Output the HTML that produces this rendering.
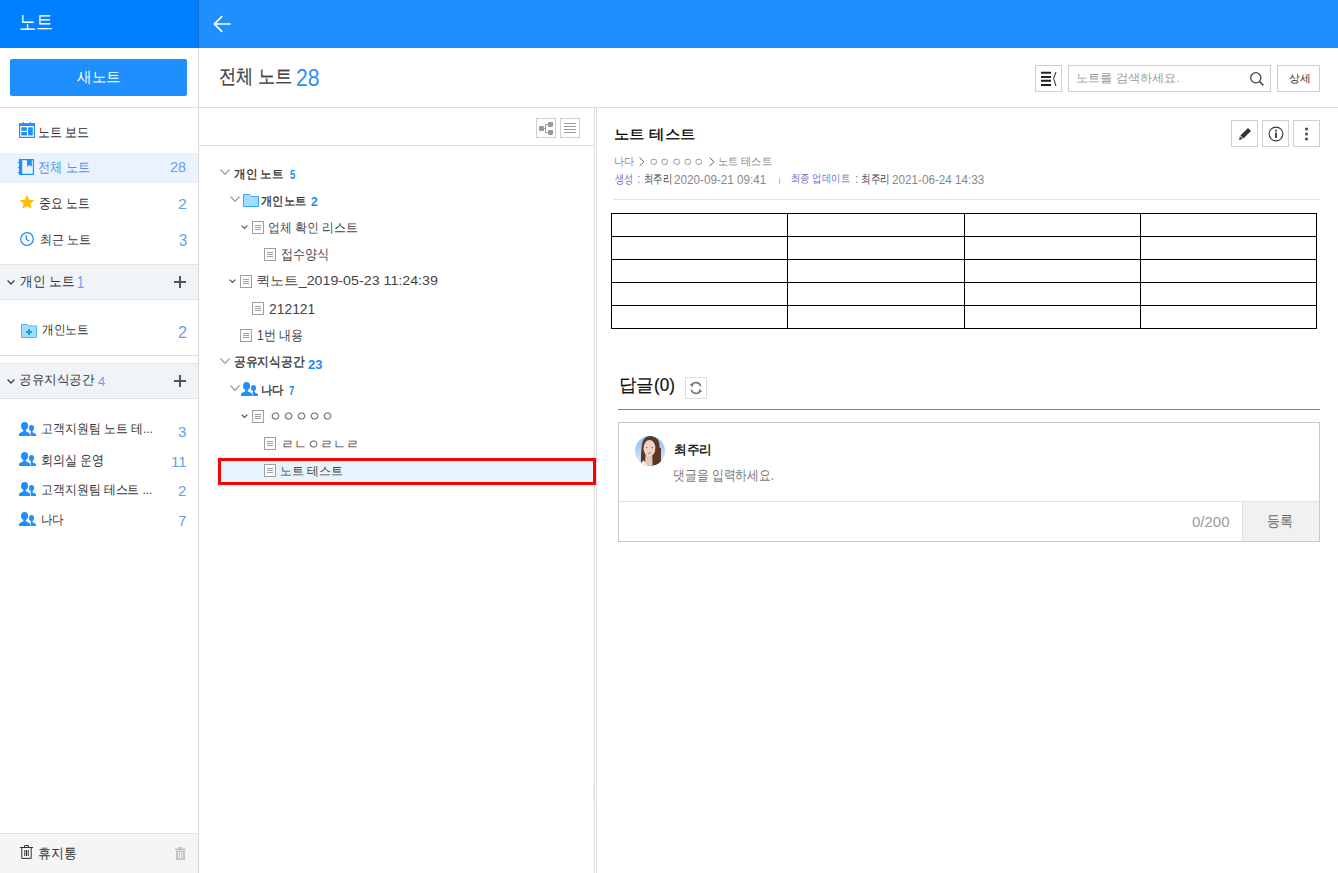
<!DOCTYPE html>
<html lang="ko">
<head>
<meta charset="utf-8">
<style>
*{box-sizing:border-box;margin:0;padding:0}
html,body{width:1338px;height:873px;overflow:hidden;background:#fff}
body{position:relative;font-family:"Liberation Sans",sans-serif;color:#333}
.a{position:absolute}
svg.a{overflow:visible}
.t{position:absolute;white-space:nowrap;line-height:1}
.hl{position:absolute;height:1px;background:#dedede}
.vl{position:absolute;width:1px;background:#dedede}
.num{color:#6a9ef2;font-size:15px}
.btn{position:absolute;border:1px solid #cfcfcf;background:#fff}
.tr{font-size:14px;color:#444}
.trb{font-size:14px;color:#333;-webkit-text-stroke:0.35px #333}
.cnt{color:#1a8cf5;font-weight:bold;font-size:12px}
.meta{font-size:12px;color:#888;letter-spacing:-0.6px}
.mb{color:#6b6fc4}
.md{color:#444}
</style>
</head>
<body>
<!-- ===== SIDEBAR ===== -->
<div class="a" style="left:0;top:0;width:199px;height:48px;background:#0080ff;border-right:1px solid #0a72dc"></div>
<div class="t" id="t_hdr" style="left: 18.6px; top: 12px; font-size: 20.77px; color: rgb(255, 255, 255); transform: scaleX(0.808); transform-origin: 0px 0px;">노트</div>
<div class="a" style="left:10px;top:59px;width:177px;height:37px;background:#1f8ffd;border-radius:2px"></div>
<div class="t" id="t_new" style="left: 77.2px; top: 69.7px; font-size: 14.66px; color: rgb(255, 255, 255); transform: scaleX(0.977); transform-origin: 0px 0px;">새노트</div>
<div class="hl" style="left:0;top:107px;width:1338px"></div>
<div class="vl" style="left:198px;top:48px;height:825px;background:#d8d8d8"></div>

<!-- menu -->
<div class="a" style="left:0;top:153px;width:198px;height:30px;background:#e8f3fd"></div>
<svg class="a" style="left:19px;top:122px" width="16" height="16" viewBox="0 0 16 16">
 <rect x="0.6" y="2.5" width="14.8" height="12.9" fill="none" stroke="#1f8ffd" stroke-width="1.2"/>
 <rect x="0" y="1.1" width="16" height="2.9" fill="#1f8ffd"/>
 <rect x="3.9" y="0" width="1" height="2" fill="#1f8ffd"/><rect x="11" y="0" width="1" height="2" fill="#1f8ffd"/>
 <rect x="2.2" y="5.3" width="5.8" height="3.4" rx="0.7" fill="#1f8ffd"/>
 <rect x="2.2" y="10.1" width="5.8" height="3.3" rx="0.7" fill="#1f8ffd"/>
 <rect x="9.1" y="5.3" width="4.7" height="8.1" rx="0.7" fill="#1f8ffd"/>
</svg>
<svg class="a" style="left:18px;top:159px" width="16" height="16" viewBox="0 0 16 16">
 <rect x="1.6" y="0.6" width="13.8" height="14.8" fill="none" stroke="#1f8ffd" stroke-width="1.2"/>
 <rect x="1" y="0" width="3.2" height="16" fill="#1f8ffd"/>
 <rect x="-0.3" y="3.1" width="1.6" height="1" fill="#1f8ffd"/><rect x="-0.3" y="8.1" width="1.6" height="1" fill="#1f8ffd"/><rect x="-0.3" y="13.1" width="1.6" height="1" fill="#1f8ffd"/>
 <path d="M9 0.6H13.8V7.8L11.4 6L9 7.8Z" fill="#1f8ffd"/>
</svg>
<svg class="a" style="left:19px;top:194px" width="16" height="16" viewBox="0 0 24 24"><path d="M12 1.2l3.2 7.3 7.9.7-6 5.2 1.8 7.8L12 18.1l-6.9 4.1 1.8-7.8-6-5.2 7.9-.7z" fill="#ffbf00"/></svg>
<svg class="a" style="left:20px;top:232px" width="14" height="14" viewBox="0 0 14 14"><circle cx="7" cy="7" r="6.3" fill="none" stroke="#1f8ffd" stroke-width="1.3"/><path d="M6.3 3.2V7.2L9.3 9.2" fill="none" stroke="#1f8ffd" stroke-width="1.3"/></svg>

<div class="t" id="m1" style="left: 38px; top: 124.6px; font-size: 14px; transform: scaleX(0.86); transform-origin: 0px 0px;">노트 보드</div>
<div class="t" id="m2" style="left: 38px; top: 160.2px; font-size: 14px; color: rgb(91, 142, 240); transform: scaleX(0.867); transform-origin: 0px 0px;">전체 노트</div>
<div class="t num" id="n1" style="left: 170.2px; top: 160px; font-size: 14.69px; transform: scaleX(0.979); transform-origin: 0px 0px;">28</div>
<div class="t" id="m3" style="left: 39px; top: 195.7px; font-size: 14px; transform: scaleX(0.841); transform-origin: 0px 0px;">중요 노트</div>
<div class="t num" id="n2" style="left: 177.8px; top: 195.6px; font-size: 15px; transform: scaleX(1.072); transform-origin: 0px 0px;">2</div>
<div class="t" id="m4" style="left: 39.8px; top: 233.7px; font-size: 12.92px; transform: scaleX(0.925); transform-origin: 0px 0px;">최근 노트</div>
<div class="t num" id="n3" style="left: 178.6px; top: 232.5px; font-size: 16.95px; transform: scaleX(0.863); transform-origin: 0px 0px;">3</div>

<!-- section 1 -->
<div class="a" style="left:0;top:264px;width:198px;height:36px;background:#f0f4f7;border-top:1px solid #dfe3e6;border-bottom:1px solid #dfe3e6"></div>
<svg class="a" style="left:7px;top:280px" width="8" height="5" viewBox="0 0 8 5"><path d="M0.6 0.6L4 4L7.4 0.6" fill="none" stroke="#444" stroke-width="1.4"/></svg>
<div class="t" id="s1" style="left: 20.2px; top: 275.4px; font-size: 13.8px; transform: scaleX(0.906); transform-origin: 0px 0px;">개인 노트</div><div class="t" id="s1n" style="left: 76.6px; top: 273.6px; font-size: 17.25px; color: rgb(106, 160, 240); transform: scaleX(0.732); transform-origin: 0px 0px;">1</div>
<svg class="a" style="left:174px;top:276px" width="12" height="12" viewBox="0 0 12 12"><path d="M6 0V12M0 6H12" stroke="#555" stroke-width="2"/></svg>
<svg class="a" style="left:21px;top:324px" width="16" height="14" viewBox="0 0 16 14"><path d="M0.5 0.5H6.6L8 2H15.5V13.5H0.5Z" fill="#a6dcfb" stroke="#4cb6f7" stroke-width="1"/><path d="M8 4.9V10.9M5 7.9H11" stroke="#169cf2" stroke-width="2"/></svg>
<div class="t" id="p1" style="left: 42px; top: 324.3px; font-size: 12.92px; transform: scaleX(0.902); transform-origin: 0px 0px;">개인노트</div>
<div class="t num" id="pn1" style="left: 177.8px; top: 324.4px; font-size: 17.25px; transform: scaleX(0.935); transform-origin: 0px 0px;">2</div>
<div class="hl" style="left:0;top:355px;width:198px"></div>
<!-- section 2 -->
<div class="a" style="left:0;top:363px;width:198px;height:36px;background:#f0f4f7;border-top:1px solid #dfe3e6;border-bottom:1px solid #dfe3e6"></div>
<svg class="a" style="left:7px;top:379px" width="8" height="5" viewBox="0 0 8 5"><path d="M0.6 0.6L4 4L7.4 0.6" fill="none" stroke="#444" stroke-width="1.4"/></svg>
<div class="t" id="s2" style="left: 19.2px; top: 374.4px; font-size: 12.75px; transform: scaleX(0.968); transform-origin: 0px 0px;">공유지식공간</div><div class="t" id="s2n" style="left: 98px; top: 374.9px; font-size: 13.02px; color: rgb(106, 160, 240); transform: scaleX(0.989); transform-origin: 0px 0px;">4</div>
<svg class="a" style="left:174px;top:375px" width="12" height="12" viewBox="0 0 12 12"><path d="M6 0V12M0 6H12" stroke="#555" stroke-width="2"/></svg>

<svg width="0" height="0" style="position:absolute">
 <defs>
  <g id="ppl"><ellipse cx="5.55" cy="4.1" rx="3.55" ry="4.1"/><path d="M0 14V12.3Q0 11.3 1.2 10.7L4.3 9.2V7H6.8V9.2L9.8 10.7Q11 11.3 11 12.3V14Z"/><ellipse cx="12.55" cy="6.1" rx="2.55" ry="3.1"/><path d="M11.6 14V10.4L12.2 9H13.5V10.2L16 11.5Q17 12 17 12.8V14Z"/></g>
  <g id="doc"><rect x="0.5" y="0.5" width="11" height="12" fill="#fff" stroke="#a0a0a0"/><path d="M3 4.5H9M3 6.5H9M3 8.5H9" stroke="#a0a0a0" stroke-width="1"/></g>
  <g id="chb"><path d="M0.5 0.5L5 5.3L9.5 0.5" fill="none" stroke="#999" stroke-width="1.2"/></g>
  <g id="chs"><path d="M0.6 0.6L3.5 3.4L6.4 0.6" fill="none" stroke="#555" stroke-width="1.3"/></g>
 </defs>
</svg>

<svg class="a" style="left:19px;top:422px" width="17" height="14" fill="#1f8ffd"><use href="#ppl"/></svg>
<svg class="a" style="left:19px;top:452px" width="17" height="14" fill="#1f8ffd"><use href="#ppl"/></svg>
<svg class="a" style="left:19px;top:482px" width="17" height="14" fill="#1f8ffd"><use href="#ppl"/></svg>
<svg class="a" style="left:19px;top:512px" width="17" height="14" fill="#1f8ffd"><use href="#ppl"/></svg>
<div class="t" id="sh1" style="left: 41px; top: 423.4px; font-size: 12.77px; transform: scaleX(0.918); transform-origin: 0px 0px;">고객지원팀 노트 테...</div>
<div class="t num" id="shn1" style="left: 178.2px; top: 423.8px; font-size: 15px; transform: scaleX(1.007); transform-origin: 0px 0px;">3</div>
<div class="t" id="sh2" style="left: 41px; top: 452.6px; font-size: 14px; transform: scaleX(0.858); transform-origin: 0px 0px;">회의실 운영</div>
<div class="t num" id="shn2" style="left: 171px; top: 453.6px; font-size: 15px;">11</div>
<div class="t" id="sh3" style="left: 41px; top: 483.8px; font-size: 12.6px; transform: scaleX(0.915); transform-origin: 0px 0px;">고객지원팀 테스트 ...</div>
<div class="t num" id="shn3" style="left: 178.2px; top: 483.4px; font-size: 15px; transform: scaleX(1.007); transform-origin: 0px 0px;">2</div>
<div class="t" id="sh4" style="left: 41px; top: 514.1px; font-size: 12.92px; transform: scaleX(0.883); transform-origin: 0px 0px;">나다</div>
<div class="t num" id="shn4" style="left: 178.2px; top: 513px; font-size: 15px; transform: scaleX(1.007); transform-origin: 0px 0px;">7</div>

<!-- trash -->
<div class="a" style="left:0;top:833px;width:198px;height:40px;background:#f5f5f5;border-top:1px solid #e2e2e2"></div>
<svg class="a" style="left:20px;top:845px" width="13" height="14" viewBox="0 0 13 14"><path d="M0 2.5H13M4.5 2.5V0.6H8.5V2.5M1.8 2.5V13.4H11.2V2.5M4.8 5V11M6.5 5V11M8.2 5V11" fill="none" stroke="#333" stroke-width="1"/></svg>
<div class="t" id="trash" style="left: 38.4px; top: 846.5px; font-size: 13.93px; transform: scaleX(0.922); transform-origin: 0px 0px;">휴지통</div>
<svg class="a" style="left:175px;top:847px" width="11" height="13" viewBox="0 0 11 13"><path d="M0 1.6H11V3H0ZM3.8 0H7.2V1.6H3.8ZM1 3.6H10V13H1Z" fill="#c4c4c4"/><path d="M3.7 5V11.5M5.5 5V11.5M7.3 5V11.5" stroke="#f5f5f5" stroke-width="0.9"/></svg>

<!-- ===== TOP BAR ===== -->
<div class="a" style="left:199px;top:0;width:1139px;height:48px;background:#1d90fe"></div>
<svg class="a" style="left:213px;top:15px" width="18" height="18" viewBox="0 0 18 18"><path d="M17.5 9H1.5M9.2 1.2L1.4 9L9.2 16.8" fill="none" stroke="#fff" stroke-width="1.7"/></svg>

<!-- main header -->
<div class="t" id="h_title" style="left: 219px; top: 67.3px; font-size: 19.7px; color: rgb(68, 68, 68); -webkit-text-stroke: 0.25px rgb(68, 68, 68); transform: scaleX(0.862); transform-origin: 0px 0px;">전체 노트</div><div class="t" id="h_num" style="left: 296px; top: 65.5px; font-size: 23.76px; color: rgb(43, 142, 245); transform: scaleX(0.89); transform-origin: 0px 0px;">28</div>

<!-- search row -->
<div class="btn" style="left:1035px;top:65px;width:27px;height:27px"></div>
<svg class="a" style="left:1041px;top:71px" width="16" height="16" viewBox="0 0 16 16"><path d="M0 1.8H10M0 5.9H10M0 9.8H10M0 13.9H10" stroke="#222" stroke-width="2"/><path d="M15 1L12.6 7.5L15 15" fill="none" stroke="#222" stroke-width="1"/></svg>
<div class="btn" style="left:1068px;top:65px;width:203px;height:27px"></div>
<div class="t" id="search_ph" style="left: 1076.2px; top: 72.8px; font-size: 11.59px; color: rgb(154, 154, 154); transform: scaleX(1.014); transform-origin: 0px 0px;">노트를 검색하세요.</div>
<svg class="a" style="left:1250px;top:72px" width="14" height="14" viewBox="0 0 14 14"><circle cx="5.8" cy="5.8" r="5.1" fill="none" stroke="#444" stroke-width="1.3"/><path d="M9.5 9.5L13.4 13.4" stroke="#444" stroke-width="1.6"/></svg>
<div class="btn" style="left:1277px;top:65px;width:43px;height:27px"></div>
<div class="t" id="detail_btn" style="left: 1289px; top: 72.8px; font-size: 11.38px; color: rgb(51, 51, 51); transform: scaleX(0.976); transform-origin: 0px 0px;">상세</div>

<!-- ===== TREE PANEL ===== -->
<div class="hl" style="left:199px;top:145px;width:395px"></div>
<div class="btn" style="left:536px;top:118px;width:20px;height:20px"></div>
<svg class="a" style="left:539px;top:122px" width="15" height="13" viewBox="0 0 15 13"><rect x="0" y="4" width="5" height="5" rx="1" fill="#999"/><rect x="9" y="0" width="5" height="5" rx="1" fill="#999"/><rect x="9" y="8" width="5" height="5" rx="1" fill="#999"/><path d="M5 6.5H7M6.5 2.5V10.5M6.5 2.5H9M6.5 10.5H9" fill="none" stroke="#999" stroke-width="1"/></svg>
<div class="btn" style="left:560px;top:118px;width:20px;height:20px"></div>
<svg class="a" style="left:564px;top:123px" width="12" height="10" viewBox="0 0 12 10"><path d="M0 0.5H12M0 3.5H12M0 6.5H12M0 9.5H12" stroke="#999" stroke-width="1"/></svg>
<div class="vl" style="left:594px;top:108px;height:765px"></div>
<div class="vl" style="left:596px;top:108px;height:765px"></div>
<div class="vl" style="left:593px;top:784px;height:22px;background:#f1f1f1"></div>

<!-- tree rows -->
<svg class="a" style="left:220px;top:169px" width="10" height="6"><use href="#chb"/></svg>
<div class="t trb" id="tr1" style="left: 234.4px; top: 168px; font-size: 12px; transform: scaleX(0.964); transform-origin: 0px 0px;">개인 노트</div><div class="t cnt" id="tr1n" style="left: 290px; top: 168px; font-size: 13.26px; transform: scaleX(0.711); transform-origin: 0px 0px;">5</div>

<svg class="a" style="left:230px;top:196px" width="10" height="6"><use href="#chb"/></svg>
<svg class="a" style="left:243px;top:194px" width="16" height="13" viewBox="0 0 16 13"><path d="M0.5 0.5H6.5L8.2 2.5H15.5V12.5H0.5Z" fill="#a6dcfb" stroke="#2ea8f6" stroke-width="1"/></svg>
<div class="t trb" id="tr2" style="left: 260.8px; top: 194.7px; font-size: 12.09px; transform: scaleX(0.945); transform-origin: 0px 0px;">개인노트</div><div class="t cnt" id="tr2n" style="left: 311px; top: 195.3px; font-size: 13.44px; transform: scaleX(0.899); transform-origin: 0px 0px;">2</div>

<svg class="a" style="left:241px;top:225px" width="7" height="4"><use href="#chs"/></svg>
<svg class="a" style="left:252px;top:221px" width="12" height="13"><use href="#doc"/></svg>
<div class="t tr" id="tr3" style="left: 268.4px; top: 220.5px; font-size: 13.09px; transform: scaleX(0.909); transform-origin: 0px 0px;">업체 확인 리스트</div>

<svg class="a" style="left:264px;top:248px" width="12" height="13"><use href="#doc"/></svg>
<div class="t tr" id="tr4" style="left: 280.8px; top: 246.9px; font-size: 14px; transform: scaleX(0.864); transform-origin: 0px 0px;">접수양식</div>

<svg class="a" style="left:229px;top:279px" width="7" height="4"><use href="#chs"/></svg>
<svg class="a" style="left:240px;top:275px" width="12" height="13"><use href="#doc"/></svg>
<div class="t tr" id="tr5" style="left: 256px; top: 273.5px; font-size: 13px; transform: scaleX(1.096); transform-origin: 0px 0px;">퀵노트_2019-05-23 11:24:39</div>

<svg class="a" style="left:252px;top:302px" width="12" height="13"><use href="#doc"/></svg>
<div class="t tr" id="tr6" style="left: 268.8px; top: 302px; font-size: 14px; transform: scaleX(0.991); transform-origin: 0px 0px;">212121</div>

<svg class="a" style="left:240px;top:329px" width="12" height="13"><use href="#doc"/></svg>
<div class="t tr" id="tr7" style="left: 257px; top: 328.1px; font-size: 14px; transform: scaleX(0.862); transform-origin: 0px 0px;">1번 내용</div>

<svg class="a" style="left:220px;top:358px" width="10" height="6"><use href="#chb"/></svg>
<div class="t trb" id="tr8" style="left: 234px; top: 354.5px; font-size: 13px; transform: scaleX(0.902); transform-origin: 0px 0px;">공유지식공간</div><div class="t cnt" id="tr8n" style="left: 308px; top: 357.6px; font-size: 13.66px; transform: scaleX(0.951); transform-origin: 0px 0px;">23</div>

<svg class="a" style="left:230px;top:385px" width="10" height="6"><use href="#chb"/></svg>
<svg class="a" style="left:241px;top:382px" width="17" height="14" fill="#1f8ffd"><use href="#ppl"/></svg>
<div class="t trb" id="tr9" style="left: 261px; top: 384px; font-size: 11.7px; transform: scaleX(0.948); transform-origin: 0px 0px;">나다</div><div class="t cnt" id="tr9n" style="left: 288.8px; top: 384.8px; font-size: 12px; transform: scaleX(0.787); transform-origin: 0px 0px;">7</div>

<svg class="a" style="left:241px;top:414px" width="7" height="4"><use href="#chs"/></svg>
<svg class="a" style="left:252px;top:410px" width="12" height="13"><use href="#doc"/></svg>
<div class="t tr" id="tr10" style="left: 269px; top: 409.4px; font-size: 14px; transform: scaleX(0.923); transform-origin: 0px 0px;">ㅇㅇㅇㅇㅇ</div>

<svg class="a" style="left:264px;top:437px" width="12" height="13"><use href="#doc"/></svg>
<div class="t tr" id="tr11" style="left: 281px; top: 436.6px; font-size: 14px; transform: scaleX(0.931); transform-origin: 0px 0px;">ㄹㄴㅇㄹㄴㄹ</div>

<div class="a" style="left:218px;top:458px;width:378px;height:27px;background:#e8f4fd;border:3px solid #ff0000"></div>
<svg class="a" style="left:264px;top:464px" width="12" height="13"><use href="#doc"/></svg>
<div class="t tr" id="tr12" style="left: 280.2px; top: 464.6px; font-size: 11.63px; transform: scaleX(0.991); transform-origin: 0px 0px;">노트 테스트</div>

<!-- ===== DETAIL ===== -->
<div class="t" id="d_title" style="left: 614px; top: 126.5px; font-size: 14.19px; color: rgb(0, 0, 0); -webkit-text-stroke: 0.3px rgb(0, 0, 0); transform: scaleX(1.104); transform-origin: 0px 0px;">노트 테스트</div>
<div class="btn" style="left:1231px;top:120px;width:27px;height:27px"></div>
<svg class="a" style="left:1239px;top:128px" width="12" height="12" viewBox="0 0 12 12"><path d="M9 0L12 3L4.4 10.6L1.4 7.6Z" fill="#333"/><path d="M0.9 8.3L3.7 11.1L0 12Z" fill="#333"/></svg>
<div class="btn" style="left:1262px;top:120px;width:27px;height:27px"></div>
<svg class="a" style="left:1268px;top:126px" width="16" height="16" viewBox="0 0 16 16"><circle cx="8" cy="8" r="6.9" fill="none" stroke="#333" stroke-width="1.1"/><rect x="7.1" y="3.7" width="1.8" height="1.8" fill="#333"/><rect x="7.1" y="6.6" width="1.8" height="5.3" fill="#333"/></svg>
<div class="btn" style="left:1293px;top:120px;width:27px;height:27px"></div>
<svg class="a" style="left:1304px;top:127px" width="5" height="14" viewBox="0 0 5 14"><circle cx="2.5" cy="2" r="1.5" fill="#444"/><circle cx="2.5" cy="7" r="1.5" fill="#444"/><circle cx="2.5" cy="12" r="1.5" fill="#444"/></svg>

<div class="t" id="bc1" style="left: 613.9px; top: 156.2px; font-size: 10.62px; color: rgb(136, 136, 136); transform: scaleX(0.929); transform-origin: 0px 0px;">나다</div>
<svg class="a" style="left:639px;top:157px" width="6" height="10" viewBox="0 0 6 10"><path d="M0.6 0.6L5 4.8L0.6 9" fill="none" stroke="#666" stroke-width="1"/></svg>
<div class="t" id="bc2" style="left: 648.4px; top: 155.6px; font-size: 12px; color: rgb(136, 136, 136); transform: scaleX(0.94); transform-origin: 0px 0px;">ㅇㅇㅇㅇㅇ</div>
<svg class="a" style="left:709px;top:157px" width="6" height="10" viewBox="0 0 6 10"><path d="M0.6 0.6L5 4.8L0.6 9" fill="none" stroke="#666" stroke-width="1"/></svg>
<div class="t" id="bc3" style="left: 717.6px; top: 155.7px; font-size: 10.62px; color: rgb(136, 136, 136); transform: scaleX(0.927); transform-origin: 0px 0px;">노트 테스트</div>
<div class="t mb" id="mt1" style="left: 615.1px; top: 173px; font-size: 12px; transform: scaleX(0.762); transform-origin: 0px 0px;">생성</div>
<div class="t mb" id="mt1c" style="left:637px;top:173px;font-size:12px">:</div>
<div class="t md" id="mt2" style="left: 643.9px; top: 173px; font-size: 12px; transform: scaleX(0.782); transform-origin: 0px 0px;">최주리</div>
<div class="t" id="mt3" style="left: 674.2px; top: 173.5px; font-size: 12.21px; color: rgb(136, 136, 136); transform: scaleX(0.958); transform-origin: 0px 0px;">2020-09-21 09:41</div>
<div class="a" style="left:779px;top:178px;width:1px;height:6px;background:#bbb"></div>
<div class="t mb" id="mt4" style="left: 790.8px; top: 172.7px; font-size: 10.58px; transform: scaleX(0.859); transform-origin: 0px 0px;">최종 업데이트</div>
<div class="t mb" id="mt4c" style="left:855px;top:173px;font-size:12px">:</div>
<div class="t md" id="mt5" style="left: 860.9px; top: 173px; font-size: 12px; transform: scaleX(0.8); transform-origin: 0px 0px;">최주리</div>
<div class="t" id="mt6" style="left: 891.6px; top: 173.5px; font-size: 12.21px; color: rgb(136, 136, 136); transform: scaleX(0.958); transform-origin: 0px 0px;">2021-06-24 14:33</div>
<div class="hl" style="left:614px;top:199px;width:706px;background:#e3e3e3"></div>

<table class="a" style="left:611px;top:213px;width:706px;height:116px;border-collapse:collapse;table-layout:fixed">
<tr><td></td><td></td><td></td><td></td></tr>
<tr><td></td><td></td><td></td><td></td></tr>
<tr><td></td><td></td><td></td><td></td></tr>
<tr><td></td><td></td><td></td><td></td></tr>
<tr><td></td><td></td><td></td><td></td></tr>
</table>
<style>td{border:1px solid #000;height:23px}</style>

<!-- comments -->
<div class="t" id="c_title" style="left: 619.2px; top: 377px; font-size: 17.62px; color: rgb(17, 17, 17); -webkit-text-stroke: 0.2px rgb(17, 17, 17); transform: scaleX(0.971); transform-origin: 0px 0px;">답글(0)</div>
<div class="btn" style="left:685px;top:377px;width:22px;height:22px;border-color:#ddd"></div>
<svg class="a" style="left:689px;top:381px" width="14" height="14" viewBox="0 0 14 14"><path d="M11.8 5.2A5 5 0 0 0 2.4 4.6M2.2 8.8A5 5 0 0 0 11.6 9.4" fill="none" stroke="#777" stroke-width="1.6"/><path d="M0.8 3.2L3.9 6.2L4.4 2.4Z" fill="#777"/><path d="M13.2 10.8L10.1 7.8L9.6 11.6Z" fill="#777"/></svg>
<div class="a" style="left:618px;top:409px;width:702px;height:1px;background:#808080"></div>

<div class="a" style="left:618px;top:422px;width:702px;height:120px;border:1px solid #c8c8c8"></div>
<div class="hl" style="left:619px;top:501px;width:624px;background:#e2e2e2"></div>
<div class="a" style="left:1242px;top:501px;width:77px;height:40px;background:#f1f1f1;border-left:1px solid #e0e0e0;border-top:1px solid #e2e2e2"></div>
<svg class="a" style="left:635px;top:436px" width="30" height="30" viewBox="0 0 30 30">
 <defs><linearGradient id="g1" x1="0" y1="0" x2="0" y2="1"><stop offset="0" stop-color="#86bbec"/><stop offset="1" stop-color="#e8f2fb"/></linearGradient>
 <clipPath id="cp"><circle cx="15" cy="15" r="15"/></clipPath></defs>
 <g clip-path="url(#cp)">
 <rect width="30" height="30" fill="url(#g1)"/>
 <path d="M5.8 30C6 20 6 8 8.5 4C10.5 0.8 13 0 15 0C18 0 22 1.5 23.5 5C25.5 10 25 22 25.5 30Z" fill="#5e3626"/>
 <path d="M10.5 18.5H17.2L17.6 30H10Z" fill="#e6cab6"/>
 <ellipse cx="14.5" cy="12.2" rx="6" ry="8.2" fill="#ecd4c2"/>
 <path d="M20.3 12C21.2 20 21 26 19.5 30H26V12Z" fill="#5e3626"/>
 <path d="M2.5 30L8.8 24.2L12.8 30Z" fill="#f3f3f3"/>
 <ellipse cx="11.8" cy="11.6" rx="1.1" ry="0.55" fill="#8d7d77"/><ellipse cx="17.2" cy="11.6" rx="1.1" ry="0.55" fill="#8d7d77"/>
 <ellipse cx="14.6" cy="17.2" rx="1.7" ry="0.7" fill="#d38a88"/>
 </g>
</svg>
<div class="t" id="c_name" style="left: 674.2px; top: 443.5px; font-size: 12.6px; color: rgb(34, 34, 34); font-weight: bold; transform: scaleX(0.977); transform-origin: 0px 0px;">최주리</div>
<div class="t" id="c_ph" style="left: 673.2px; top: 468.2px; font-size: 14px; color: rgb(119, 119, 119); transform: scaleX(0.844); transform-origin: 0px 0px;">댓글을 입력하세요.</div>
<div class="t" id="c_cnt" style="left: 1192px; top: 514.4px; font-size: 15px; color: rgb(153, 153, 153);">0/200</div>
<div class="t" id="c_btn" style="left: 1267.2px; top: 512.8px; font-size: 15px; color: rgb(102, 102, 102); transform: scaleX(0.863); transform-origin: 0px 0px;">등록</div>

</body>
</html>
